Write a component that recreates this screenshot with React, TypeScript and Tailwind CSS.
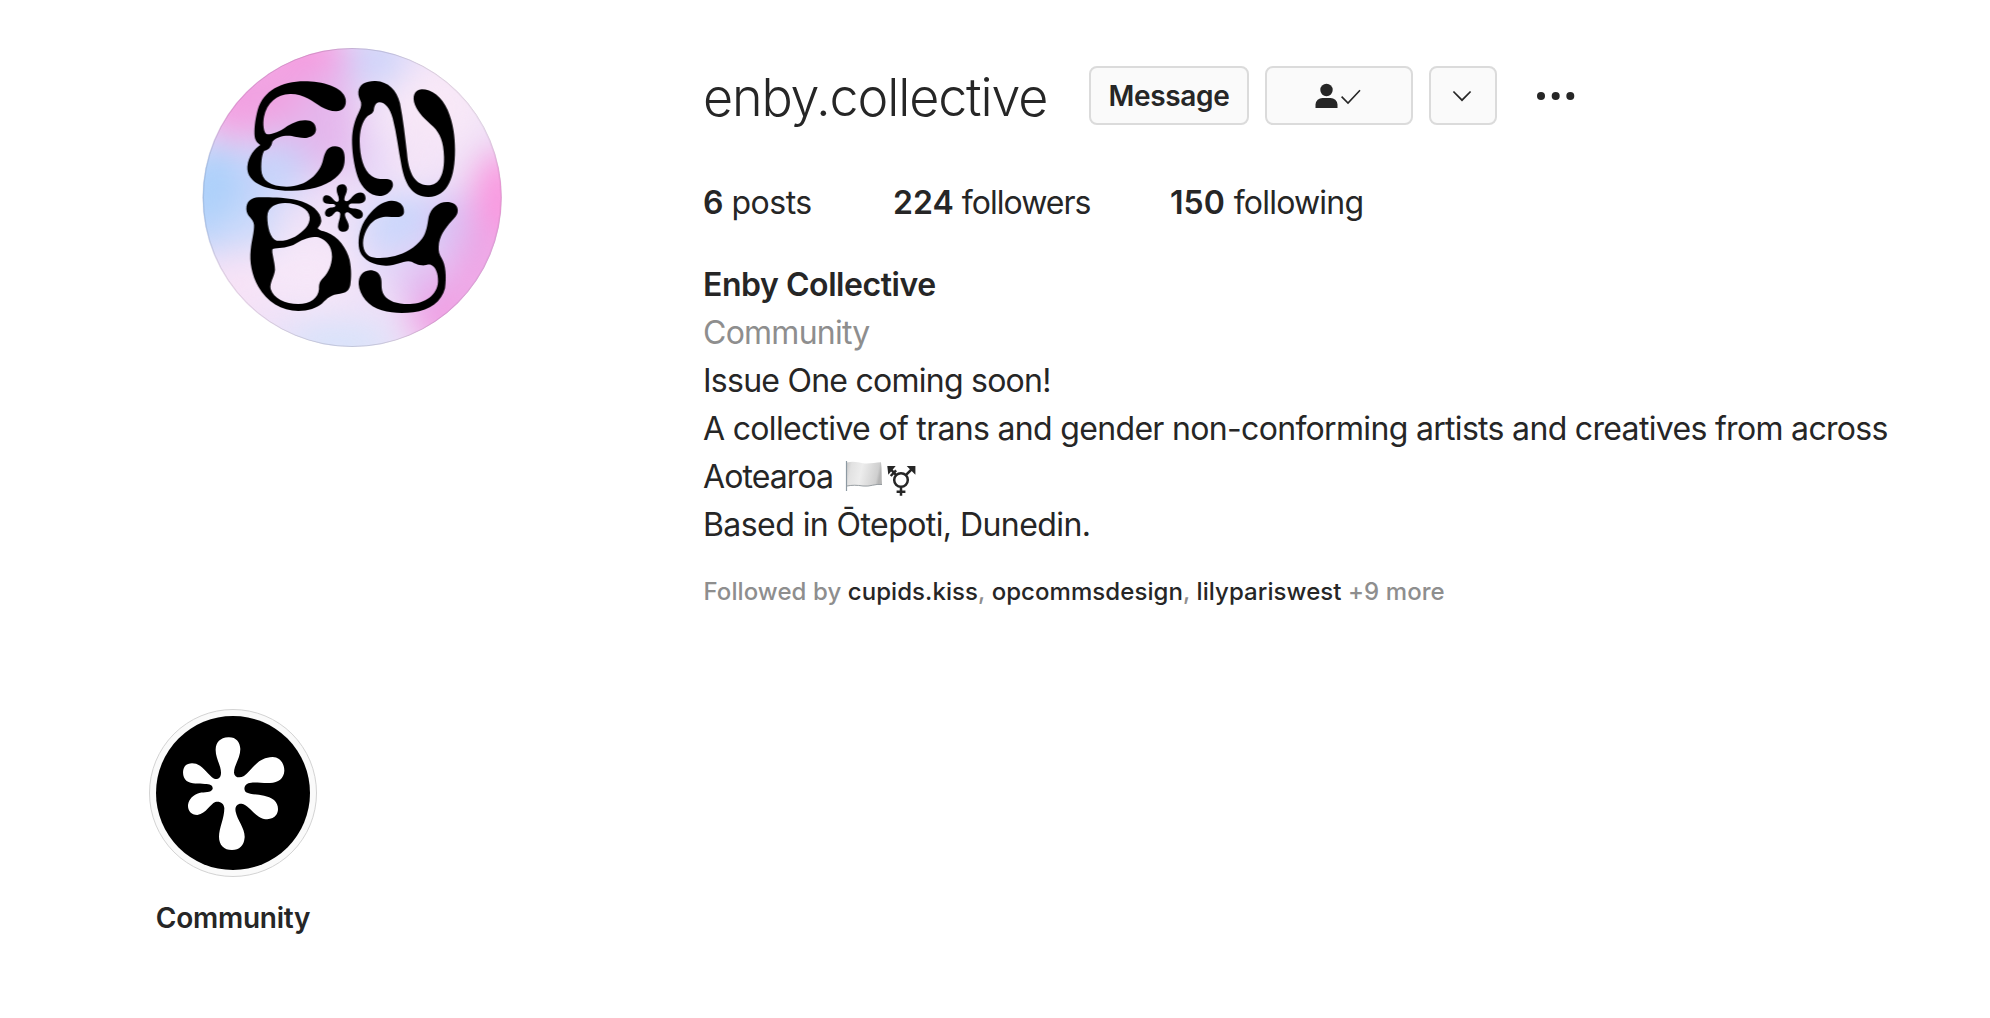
const SPLAT =
  "M265 112C288 111 300 126 301 147C301 175 282 195 282 218C283 232 298 236 312 228C335 213 350 172 398 171C420 172 433 190 433 212C432 235 415 248 390 249C365 250 340 245 325 250C312 256 310 268 318 277C335 287 375 280 402 300C415 312 417 330 410 343C400 358 380 362 362 353C340 342 325 315 305 311C290 310 284 322 287 335C292 360 315 385 314 412C312 438 298 450 276 450C252 450 237 435 237 410C237 385 253 355 253 325C252 310 240 303 226 306C210 312 200 340 172 345C152 345 143 330 144 315C147 297 160 284 178 279C195 275 212 280 218 267C219 255 210 252 195 252C175 250 155 253 140 243C127 232 126 210 135 198C145 187 165 187 180 197C198 210 212 232 225 237C236 238 243 232 243 218C243 195 226 175 227 148C228 128 240 113 265 112Z";

const BLOBS: [number, number, number, number, number, string][] = [
  [330, 60, 130, 110, 0, "#f59de0"],
  [130, 170, 130, 120, -35, "#f39fe1"],
  [230, 190, 120, 100, -30, "#f0a3e2"],
  [545, 60, 95, 90, 0, "#cfd4f9"],
  [330, 330, 160, 90, 0, "#e3bdee"],
  [400, 230, 90, 140, 0, "#e4b6ec"],
  [60, 470, 120, 160, 0, "#acd0fa"],
  [230, 400, 110, 90, -20, "#c6d3fa"],
  [150, 560, 110, 60, 0, "#c9d9fa"],
  [720, 200, 150, 130, 0, "#f8e8f7"],
  [640, 350, 120, 110, 0, "#f4e4f7"],
  [530, 370, 40, 100, 0, "#e2d2f7"],
  [400, 470, 90, 60, 0, "#eedff7"],
  [610, 550, 120, 80, -35, "#c9d6fb"],
  [770, 570, 70, 120, 0, "#d9c2f4"],
  [915, 500, 85, 170, 0, "#f998df"],
  [860, 680, 90, 130, 25, "#eea6e6"],
  [740, 820, 100, 100, 0, "#f09fe3"],
  [670, 720, 70, 70, 0, "#e0b9f0"],
  [120, 740, 110, 110, 0, "#f6e2f6"],
  [340, 690, 150, 110, 0, "#f6e7f8"],
  [560, 690, 70, 60, 0, "#e6daf8"],
  [430, 910, 170, 60, 0, "#d6e3fa"],
];

function Avatar() {
  return (
    <svg viewBox="21 24 900 900" className="size-[300px]" role="img" aria-label="Enby">
      <defs>
        <clipPath id="disc">
          <circle cx="471.500" cy="472.500" r="448.500" />
        </clipPath>
        <filter id="soft" x="-50%" y="-50%" width="200%" height="200%" colorInterpolationFilters="sRGB">
          <feGaussianBlur stdDeviation="50" />
        </filter>
      </defs>
      <g clipPath="url(#disc)">
        <rect x="0" y="0" width="945" height="945" fill="#efe2f8" />
        <g filter="url(#soft)">
          {BLOBS.map(([x, y, rx, ry, rot, fill], i) => (
            <ellipse key={i} cx={x} cy={y} rx={rx} ry={ry} fill={fill} transform={`rotate(${rot} ${x} ${y})`} />
          ))}
        </g>
      </g>
      <circle cx="471.500" cy="472.500" r="447" fill="none" stroke="#000" strokeOpacity="0.13" strokeWidth="3" />
      <path
        transform="translate(120 90)"
        d="M303 124C325 124 335 108 332 88C325 50 260 34 208 34C140 34 85 62 68 120C60 150 57 180 59 200C62 215 68 218 76 225C60 235 40 258 37 290C35 330 75 352 130 360C190 368 260 358 300 325C325 305 330 285 329 262C329 240 318 229 300 229C275 229 269 250 264 270C255 310 215 350 155 350C105 350 80 330 79 300C78 270 82 250 88 242C100 240 110 230 112 215C125 200 150 195 170 198C185 202 205 205 217 203C235 200 243 190 243 178C242 160 230 151 212 151C190 150 170 160 150 173C135 183 115 192 97 193C85 190 83 160 87 140C95 100 125 73 165 72C205 71 235 95 258 110C272 118 288 124 303 124Z"
      />
      <path
        transform="translate(450 90)"
        d="M40 65C42 42 65 32 92 33C130 35 155 60 165 100C175 150 180 200 186 250C190 300 205 345 248 346C285 346 298 310 297 260C296 215 285 190 265 170C240 148 220 130 210 105C200 80 208 60 230 58C260 58 290 80 308 120C325 160 330 200 330 240C330 320 310 380 250 381C200 380 180 340 170 290C160 240 155 190 143 145C135 115 120 97 103 97C92 98 88 108 86 122C82 132 75 133 68 138C50 155 44 185 44 215C45 260 55 300 80 318C92 327 108 328 125 327C140 327 146 338 143 350C137 368 120 378 103 378C75 376 50 355 38 320C25 280 21 240 21 210C22 175 30 150 40 130C46 118 50 108 48 97C44 85 39 78 40 65Z"
      />
      <path
        transform="translate(120 435)"
        fillRule="evenodd"
        d="M34 72C34 50 48 38 70 37C100 36 150 37 185 45C230 56 258 80 259 108C258 118 252 124 248 130C255 138 262 137 275 142C310 155 335 190 344 225C350 255 349 280 346 300C342 318 332 324 315 326C290 328 275 340 262 355C245 370 220 378 190 378C140 377 95 350 70 305C50 270 43 230 47 195C50 165 58 140 57 120C56 100 34 95 34 72ZM97 95C97 65 125 54 150 54C190 55 222 72 224 97C226 120 205 140 180 155C160 165 140 169 125 167C105 160 97 125 97 95ZM113 192C130 188 150 190 175 180C200 165 225 152 250 157C275 165 291 185 291 215C290 240 280 262 265 278C252 290 252 300 252 312C250 340 225 357 190 357C150 357 115 340 107 312C103 295 118 275 120 255C120 230 108 200 113 192Z"
      />
      <path
        transform="translate(450 435)"
        d="M177 80C178 58 160 46 138 47C100 50 65 90 50 125C40 150 38 180 45 200C55 225 85 240 122 242C150 243 170 230 190 229C205 229 210 240 230 241C240 242 247 238 257 239C272 245 280 265 279 290C277 330 240 355 195 357C160 358 130 350 117 330C106 312 112 295 108 280C103 262 90 256 75 256C52 257 40 275 41 298C43 330 70 365 110 376C140 385 175 385 205 382C255 376 290 350 300 310C305 275 302 240 290 220C283 208 280 198 281 185C282 155 300 130 320 108C332 95 340 88 338 73C336 58 322 51 305 51C280 51 258 70 251 95C247 120 245 140 232 160C210 190 180 205 150 213C120 220 90 222 72 213C52 200 50 170 60 145C72 115 90 100 115 96C130 94 145 97 158 96C170 95 177 90 177 80Z"
      />
      <path transform="translate(329 385.600) scale(0.422)" d={SPLAT} />
    </svg>
  );
}

const box = "flex h-[59px] items-center justify-center rounded-lg border-2 border-[#dbdbdb] bg-[#fafafa]";

function Actions() {
  return (
    <>
      <button className={`${box} ml-[38px] w-[160px] text-[28px] font-semibold tracking-[-0.350px]`}>Message</button>
      <button className={`${box} ml-[16px] w-[148px] pr-[3px]`} aria-label="Following">
        <svg width="46" height="26" viewBox="0 0 46 26" fill="none">
          <circle cx="11.500" cy="7" r="6.200" fill="#262626" />
          <path d="M0.500 25v-3.500a7 7 0 0 1 7-6.500h8a7 7 0 0 1 7 6.500V25z" fill="#262626" />
          <path d="M26.600 13.600l6.400 6.400L45 7.300" stroke="#262626" strokeWidth="1.600" />
        </svg>
      </button>
      <button className={`${box} ml-[16px] w-[68px] pr-[2px]`} aria-label="Similar accounts">
        <svg width="20" height="12" viewBox="0 0 20 12" fill="none">
          <path d="M1.400 1.500L10 10.200l8.600-8.700" stroke="#262626" strokeWidth="1.700" />
        </svg>
      </button>
      <button className="ml-[39px] flex h-[59px] items-center" aria-label="Options">
        <svg width="40" height="10" viewBox="0 0 40 10" fill="#262626">
          <circle cx="5" cy="5" r="4" />
          <circle cx="19.700" cy="5" r="4" />
          <circle cx="34.300" cy="5" r="4" />
        </svg>
      </button>
    </>
  );
}

function FlagEmoji() {
  return (
    <svg width="38" height="32" viewBox="0 0 38 32" className="-mt-[2px]">
      <defs>
        <linearGradient id="cloth" x1="0" x2="1" y1="0" y2="0.150">
          <stop offset="0" stopColor="#c9c9c9" />
          <stop offset="0.150" stopColor="#e2e2e2" />
          <stop offset="0.450" stopColor="#ededed" />
          <stop offset="0.750" stopColor="#dadada" />
          <stop offset="0.920" stopColor="#cfcfcf" />
          <stop offset="1" stopColor="#b5b5b5" />
        </linearGradient>
      </defs>
      <path d="M2 2.500C8 .8 13 2.200 18 3.200C24 4.300 30 2.200 36 2.200C37 9 36.500 18 37 24.500C30 23.500 25 27 18 26C12 25 7 25 2 26Z" fill="url(#cloth)" />
      <path d="M2 26C7 25 12 25 18 26C25 27 30 23.500 37 24.500" fill="none" stroke="#8d9499" strokeWidth="0.900" />
      <path d="M1.500 1v30" stroke="#8d9aa3" strokeWidth="1.200" />
    </svg>
  );
}

function TransgenderSymbol() {
  return (
    <svg width="30" height="32" viewBox="0 0 30 32" fill="none" stroke="#262626" strokeWidth="2.500" className="ml-[4px] mt-[8px]">
      <circle cx="14" cy="15" r="6.800" />
      <path d="M14 21.800v9M9.600 26.700h8.800M18.800 10.200L26 3M9.200 10.200L3 3.500M3.700 11l5.400-5.600" />
      <path d="M19.700 1h8.700v8.700zM0.300 1h8.400l-7.400 8.700z" fill="#262626" stroke="none" />
    </svg>
  );
}

export default function App() {
  return (
    <main className="h-[1018px] w-[1990px] overflow-hidden bg-white font-['Inter',sans-serif] text-[#262626]">
      <header className="flex h-[709px]">
        <div className="w-[703px] shrink-0 pl-[202px] pt-[48px]">
          <Avatar />
        </div>
        <section className="w-[1230px] pt-[66px]">
          <div className="flex h-[59px] items-center">
            <h1 className="w-[348px] whitespace-nowrap pt-[5px] text-[52px] font-[330] leading-[64px] tracking-[-1.150px]">
              enby.collective
            </h1>
            <Actions />
          </div>
          <ul className="mt-[54px] flex text-[32px] leading-[48px]">
            <li className="flex w-[190px] gap-[8px]">
              <b className="font-semibold">6</b>
              <span className="tracking-[-0.500px]">posts</span>
            </li>
            <li className="flex w-[277px] gap-[8px]">
              <b className="font-semibold">224</b>
              <span className="tracking-[-0.950px]">followers</span>
            </li>
            <li className="flex gap-[9px]">
              <b className="font-semibold">150</b>
              <span className="tracking-[-0.800px]">following</span>
            </li>
          </ul>
          <div className="mt-[34px] whitespace-nowrap text-[32px] leading-[48px]">
            <h2 className="font-semibold tracking-[-0.450px]">Enby Collective</h2>
            <p className="tracking-[-0.750px] text-[#8e8e8e]">Community</p>
            <p className="tracking-[-0.750px]">Issue One coming soon!</p>
            <p className="tracking-[-0.680px]">
              A collective of trans and gender non-conforming artists and creatives from across
            </p>
            <p className="flex h-12 items-center tracking-[-0.900px]">
              <span className="mr-[12px]">Aotearoa</span>
              <FlagEmoji />
              <TransgenderSymbol />
            </p>
            <p className="tracking-[-0.570px]">Based in Ōtepoti, Dunedin.</p>
          </div>
          <p className="mt-[24.500px] whitespace-nowrap pl-[0.500px] text-[24px] font-medium leading-[36px] tracking-[0.070px] text-[#8e8e8e]">
            Followed by <span className="text-[#262626]">cupids.kiss</span>,{" "}
            <span className="text-[#262626]">opcommsdesign</span>,{" "}
            <span className="text-[#262626]">lilypariswest</span> +9 more
          </p>
        </section>
      </header>
      <div className="ml-[149px] flex w-[168px] flex-col items-center">
        <div className="flex size-[168px] items-center justify-center rounded-full border border-[#d3d3d3] bg-[#fafafa]">
          <svg width="154" height="154" viewBox="48 48 462 462">
            <circle cx="279" cy="279" r="231" />
            <path d={SPLAT} fill="#fff" />
          </svg>
        </div>
        <span className="mt-[23px] text-[28px] font-semibold leading-[36px] tracking-[-0.250px]">Community</span>
      </div>
    </main>
  );
}
